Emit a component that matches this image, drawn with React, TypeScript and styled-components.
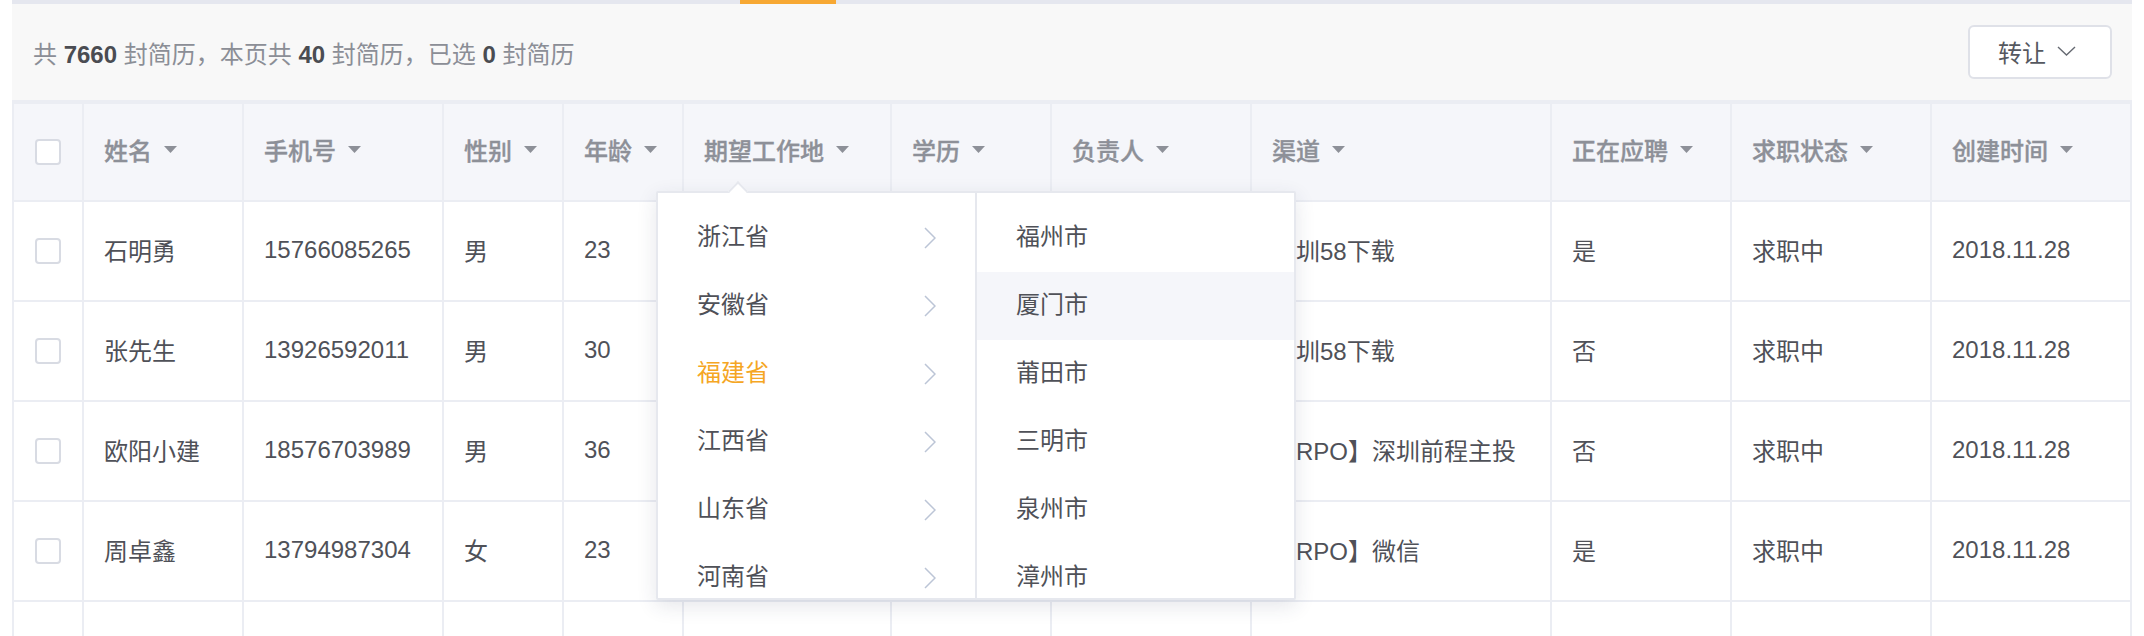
import React from 'react';
import styled, { createGlobalStyle } from 'styled-components';

const GlobalStyle = createGlobalStyle`
  html, body { margin: 0; padding: 0; background: #ffffff; overflow: hidden; }
  body { font-family: "Liberation Sans", "Noto Sans CJK SC", sans-serif; }
  * { box-sizing: border-box; }
`;

const COLS = [70, 160, 200, 120, 120, 208, 160, 200, 300, 180, 200, 200];
const GRID = COLS.map((c) => `${c}px`).join(' ');

const Page = styled.div`
  width: 2144px;
  padding: 0 12px;
`;

const Board = styled.section`
  width: 2120px;
  display: flex;
  flex-direction: column;
`;

const TabLine = styled.div`
  height: 4px;
  background: #e5e7ef;
  display: flex;
`;

const TabIndicator = styled.div`
  margin-left: 728px;
  width: 96px;
  height: 4px;
  background: #f7a833;
`;

const Toolbar = styled.div`
  height: 96px;
  background: #f8f8f8;
  display: flex;
  align-items: center;
  justify-content: space-between;
  padding: 0 20px 0 21px;
`;

const Summary = styled.div`
  font-size: 24px;
  color: #8b8e96;
  white-space: pre;
`;

const Num = styled.b`
  font-weight: 700;
  color: #4a4c52;
`;

const TransferButton = styled.button`
  width: 144px;
  height: 54px;
  border: 2px solid #dfe1e8;
  border-radius: 6px;
  background: #ffffff;
  display: flex;
  align-items: center;
  gap: 11px;
  padding: 0 0 2px 28px;
  font-family: inherit;
  font-size: 24px;
  color: #555860;
  cursor: pointer;
`;

const Separator = styled.div`
  height: 4px;
  background: #ebedf3;
`;

const Table = styled.div`
  border-right: 2px solid #ebedf3;
  display: flex;
  flex-direction: column;
`;

const Row = styled.div<{ $header?: boolean }>`
  display: grid;
  grid-template-columns: ${GRID};
  height: ${(p) => (p.$header ? 98 : 100)}px;
  background: ${(p) => (p.$header ? '#f5f6fa' : '#ffffff')};
  border-bottom: 2px solid #ebedf3;
`;

const Cell = styled.div<{ $header?: boolean; $center?: boolean }>`
  border-left: 2px solid #ebedf3;
  display: flex;
  align-items: center;
  justify-content: ${(p) => (p.$center ? 'center' : 'flex-start')};
  padding: 0 0 ${(p) => (p.$center ? 0 : p.$header ? 5 : 3)}px ${(p) => (p.$center ? 0 : 20)}px;
  gap: 12px;
  font-size: 24px;
  white-space: nowrap;
  color: ${(p) => (p.$header ? '#8d9098' : '#4f5158')};
  font-weight: ${(p) => (p.$header ? 500 : 400)};
  -webkit-text-stroke: ${(p) => (p.$header ? '0.35px #8d9098' : '0')};
`;

const AnchorCell = styled(Cell)`
  position: relative;
  overflow: visible;
`;

const Checkbox = styled.span`
  width: 26px;
  height: 26px;
  border: 2px solid #d8dbe3;
  border-radius: 4px;
  background: #ffffff;
  display: block;
`;

const Dropdown = styled.div`
  position: absolute;
  left: -28px;
  top: 87px;
  width: 640px;
  height: 409px;
  background: #ffffff;
  border: 2px solid #e6e8ee;
  border-radius: 2px;
  box-shadow: 0 6px 20px rgba(40, 50, 80, 0.12);
  display: flex;
  z-index: 10;
  font-weight: 400;
  -webkit-text-stroke: 0;
`;

const Caret = styled.span`
  position: absolute;
  left: 73px;
  top: -9px;
  width: 14px;
  height: 14px;
  background: #ffffff;
  border-top: 2px solid #e6e8ee;
  border-left: 2px solid #e6e8ee;
  transform: rotate(45deg);
`;

const Column = styled.ul<{ $divider?: boolean }>`
  list-style: none;
  margin: 0;
  padding: 11px 0 0;
  height: 100%;
  overflow: hidden;
  width: ${(p) => (p.$divider ? 319 : 317)}px;
  border-right: ${(p) => (p.$divider ? '2px solid #e6e8ee' : 'none')};
  position: relative;
  z-index: 1;
`;

const Option = styled.li<{ $active?: boolean; $hover?: boolean }>`
  height: 68px;
  display: flex;
  align-items: center;
  justify-content: space-between;
  padding: 0 39px;
  font-size: 24px;
  color: ${(p) => (p.$active ? '#f5a623' : '#4f5158')};
  background: ${(p) => (p.$hover ? '#f5f6fa' : 'transparent')};
`;

const OptionLabel = styled.span`
  margin-bottom: 7px;
`;

const SortIcon = () => (
  <svg width="13" height="7" viewBox="0 0 13 7">
    <polygon points="0,0 13,0 6.5,7" fill="#8d9098" />
  </svg>
);

const Chevron = () => (
  <svg width="12" height="22" viewBox="0 0 12 22">
    <polyline points="1,1 11,11 1,21" fill="none" stroke="#bcc5d6" strokeWidth="1.5" />
  </svg>
);

const DownChevron = () => (
  <svg width="19" height="10" viewBox="0 0 19 10">
    <polyline points="1,1 9.5,9 18,1" fill="none" stroke="#666a72" strokeWidth="1.4" />
  </svg>
);

const headers = ['姓名', '手机号', '性别', '年龄', '期望工作地', '学历', '负责人', '渠道', '正在应聘', '求职状态', '创建时间'];

const rows = [
  ['石明勇', '15766085265', '男', '23', '', '', '', '深圳58下载', '是', '求职中', '2018.11.28'],
  ['张先生', '13926592011', '男', '30', '', '', '', '深圳58下载', '否', '求职中', '2018.11.28'],
  ['欧阳小建', '18576703989', '男', '36', '', '', '', '【RPO】深圳前程主投', '否', '求职中', '2018.11.28'],
  ['周卓鑫', '13794987304', '女', '23', '', '', '', '【RPO】微信', '是', '求职中', '2018.11.28'],
  ['', '', '', '', '', '', '', '', '', '', ''],
];

const provinces = ['浙江省', '安徽省', '福建省', '江西省', '山东省', '河南省'];
const cities = ['福州市', '厦门市', '莆田市', '三明市', '泉州市', '漳州市'];

export default function App() {
  return (
    <Page>
      <GlobalStyle />
      <Board>
        <TabLine>
          <TabIndicator />
        </TabLine>
        <Toolbar>
          <Summary>
            共 <Num>7660</Num> 封简历，本页共 <Num>40</Num> 封简历，已选 <Num>0</Num> 封简历
          </Summary>
          <TransferButton>
            转让
            <DownChevron />
          </TransferButton>
        </Toolbar>
        <Separator />
        <Table>
          <Row $header>
            <Cell $header $center>
              <Checkbox />
            </Cell>
            {headers.map((h) =>
              h === '期望工作地' ? (
                <AnchorCell key={h} $header>
                  {h}
                  <SortIcon />
                  <Dropdown>
                    <Caret />
                    <Column $divider>
                      {provinces.map((p) => (
                        <Option key={p} $active={p === '福建省'}>
                          <OptionLabel>{p}</OptionLabel>
                          <Chevron />
                        </Option>
                      ))}
                    </Column>
                    <Column>
                      {cities.map((c) => (
                        <Option key={c} $hover={c === '厦门市'}>
                          <OptionLabel>{c}</OptionLabel>
                        </Option>
                      ))}
                    </Column>
                  </Dropdown>
                </AnchorCell>
              ) : (
                <Cell key={h} $header>
                  {h}
                  <SortIcon />
                </Cell>
              )
            )}
          </Row>
          {rows.map((r, ri) => (
            <Row key={ri}>
              <Cell $center>
                <Checkbox />
              </Cell>
              {r.map((v, i) => (
                <Cell key={i}>{v}</Cell>
              ))}
            </Row>
          ))}
        </Table>
      </Board>
    </Page>
  );
}
